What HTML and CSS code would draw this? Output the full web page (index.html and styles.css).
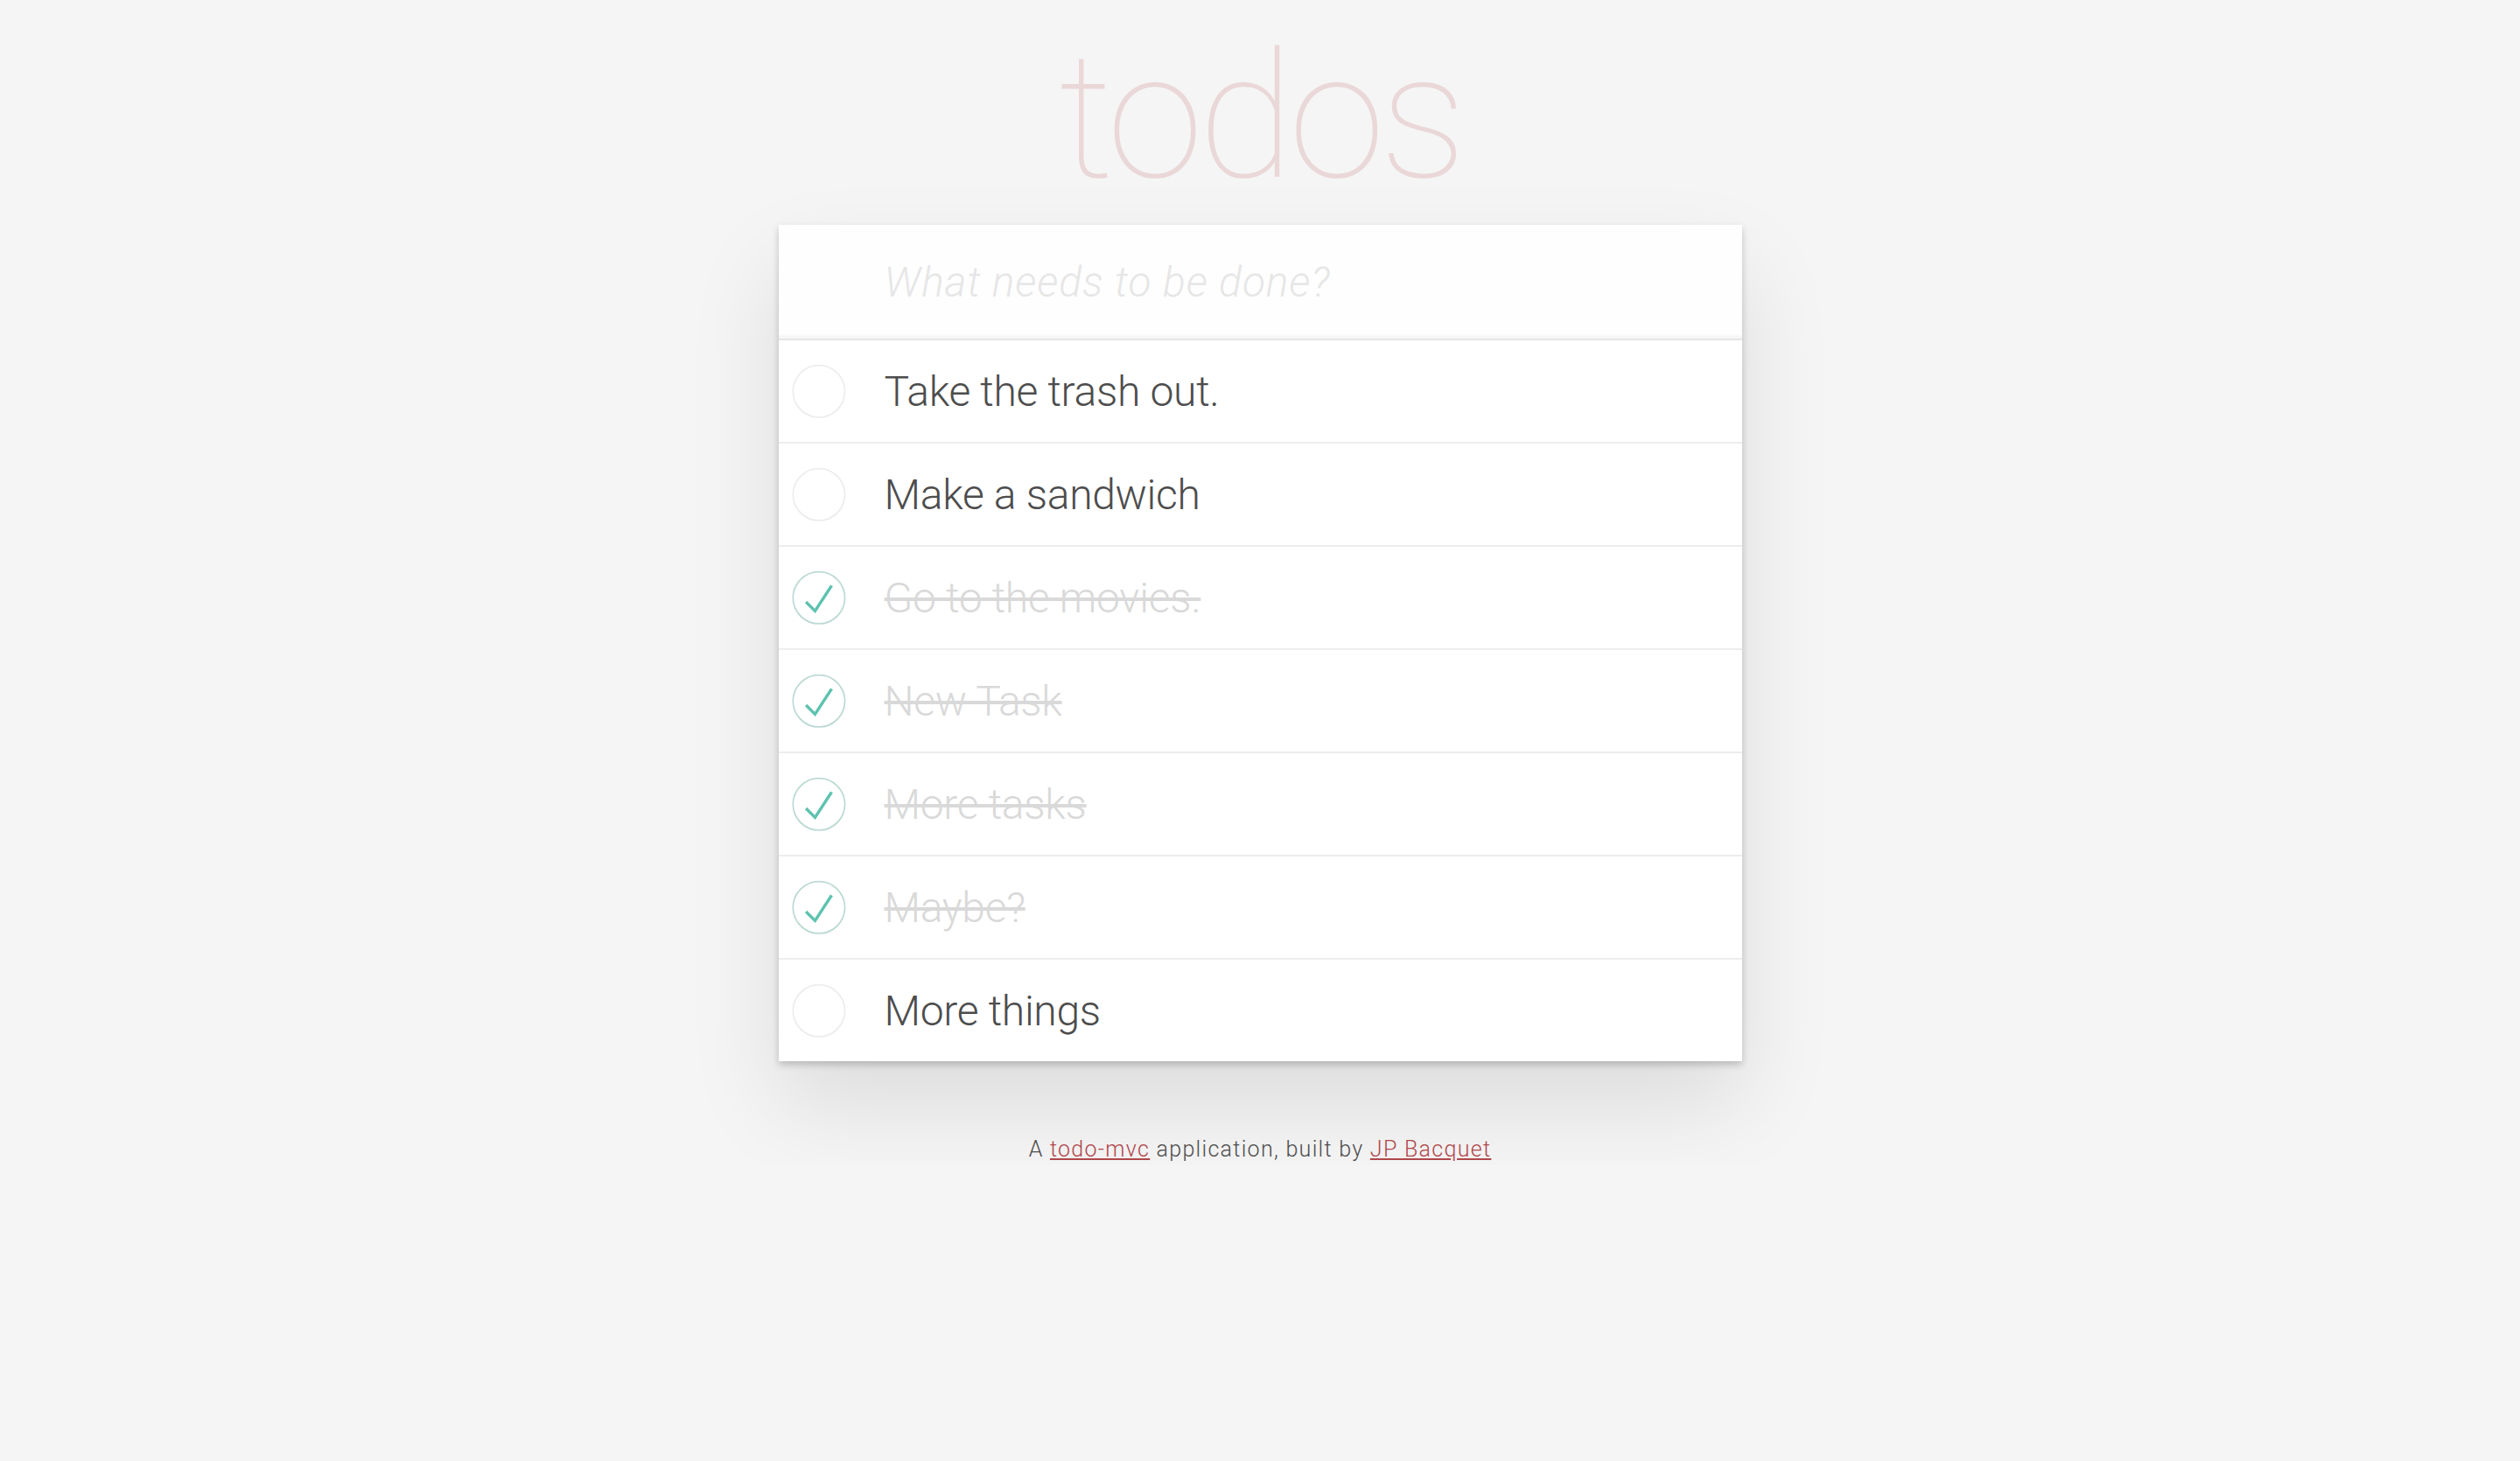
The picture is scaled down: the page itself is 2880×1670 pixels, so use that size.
FILE: index.html
```html
<!DOCTYPE html>
<html lang="en">
<head>
<meta charset="utf-8">
<title>todos</title>
<link rel="stylesheet" href="styles.css">
</head>
<body>
<section class="todoapp">
  <h1 class="title">todos</h1>
  <div class="card">
    <header class="header">
      <input class="new-todo" type="text" placeholder="What needs to be done?">
    </header>
    <ul class="todo-list">
      <li class="todo">
        <svg class="toggle" width="80" height="80" viewBox="-10 -18 100 135"><circle cx="50" cy="50" r="50" fill="none" stroke="#ededed" stroke-width="3"/></svg>
        <label class="label">Take the trash out.</label>
      </li>
      <li class="todo">
        <svg class="toggle" width="80" height="80" viewBox="-10 -18 100 135"><circle cx="50" cy="50" r="50" fill="none" stroke="#ededed" stroke-width="3"/></svg>
        <label class="label">Make a sandwich</label>
      </li>
      <li class="todo completed">
        <svg class="toggle" width="80" height="80" viewBox="-10 -18 100 135"><circle cx="50" cy="50" r="50" fill="none" stroke="#bddad5" stroke-width="3"/><path fill="#5dc2af" d="M72 25L42 71 27 56l-4 4 20 20 34-52z"/></svg>
        <label class="label">Go to the movies.</label>
      </li>
      <li class="todo completed">
        <svg class="toggle" width="80" height="80" viewBox="-10 -18 100 135"><circle cx="50" cy="50" r="50" fill="none" stroke="#bddad5" stroke-width="3"/><path fill="#5dc2af" d="M72 25L42 71 27 56l-4 4 20 20 34-52z"/></svg>
        <label class="label">New Task</label>
      </li>
      <li class="todo completed">
        <svg class="toggle" width="80" height="80" viewBox="-10 -18 100 135"><circle cx="50" cy="50" r="50" fill="none" stroke="#bddad5" stroke-width="3"/><path fill="#5dc2af" d="M72 25L42 71 27 56l-4 4 20 20 34-52z"/></svg>
        <label class="label">More tasks</label>
      </li>
      <li class="todo completed">
        <svg class="toggle" width="80" height="80" viewBox="-10 -18 100 135"><circle cx="50" cy="50" r="50" fill="none" stroke="#bddad5" stroke-width="3"/><path fill="#5dc2af" d="M72 25L42 71 27 56l-4 4 20 20 34-52z"/></svg>
        <label class="label">Maybe?</label>
      </li>
      <li class="todo">
        <svg class="toggle" width="80" height="80" viewBox="-10 -18 100 135"><circle cx="50" cy="50" r="50" fill="none" stroke="#ededed" stroke-width="3"/></svg>
        <label class="label">More things</label>
      </li>
    </ul>
  </div>
  <footer class="info">A <a href="#">todo-mvc</a> application, built by <a href="#">JP Bacquet</a></footer>
</section>
</body>
</html>
```
FILE: styles.css
```css
html, body {
  margin: 0;
  padding: 0;
}

body {
  background: #f5f5f5;
  color: #4d4d4d;
  font-family: Roboto, "Liberation Sans", sans-serif;
  font-weight: 300;
  -webkit-font-smoothing: antialiased;
}

.todoapp {
  width: 1101px;
  margin: 0 auto;
  display: flex;
  flex-direction: column;
}

.title {
  margin: 34px 0 23px;
  font-size: 200px;
  line-height: 200px;
  font-weight: 100;
  letter-spacing: -6px;
  text-align: center;
  color: rgba(175, 47, 47, 0.15);
}

.card {
  background: #fff;
  box-shadow: 0 4px 8px 0 rgba(0, 0, 0, 0.2), 0 50px 100px 0 rgba(0, 0, 0, 0.1);
}

.header {
  display: flex;
}

.new-todo {
  flex: 1;
  margin: 0;
  border: none;
  outline: none;
  box-sizing: border-box;
  height: 130px;
  padding: 33px 32px 33px 121px;
  font-family: inherit;
  font-size: 48px;
  font-weight: 300;
  line-height: 64px;
  letter-spacing: 0.9px;
  color: #4d4d4d;
  background: rgba(0, 0, 0, 0.003);
  box-shadow: inset 0 -4px 2px rgba(0, 0, 0, 0.03);
}

.new-todo::placeholder {
  font-style: italic;
  font-weight: 300;
  color: #e6e6e6;
}

.todo-list {
  margin: 0;
  padding: 0;
  list-style: none;
  border-top: 2px solid #e6e6e6;
}

.todo {
  display: flex;
  align-items: center;
  border-bottom: 2px solid #ededed;
}

.todo:last-child {
  border-bottom: none;
}

.toggle {
  flex: none;
  width: 80px;
  height: 80px;
}

.label {
  flex: 1;
  padding: 31px 60px 29px 41px;
  font-size: 48px;
  line-height: 56px;
  letter-spacing: -0.3px;
  color: #4d4d4d;
  white-space: pre-line;
}

.completed .label {
  color: #d9d9d9;
  text-decoration: line-through;
}

.info {
  margin-top: 84px;
  text-align: center;
  font-size: 25px;
  letter-spacing: 1.3px;
  line-height: 34px;
  color: #4d4d4d;
}

.info a {
  color: #b0474a;
  text-decoration: underline;
}
```
